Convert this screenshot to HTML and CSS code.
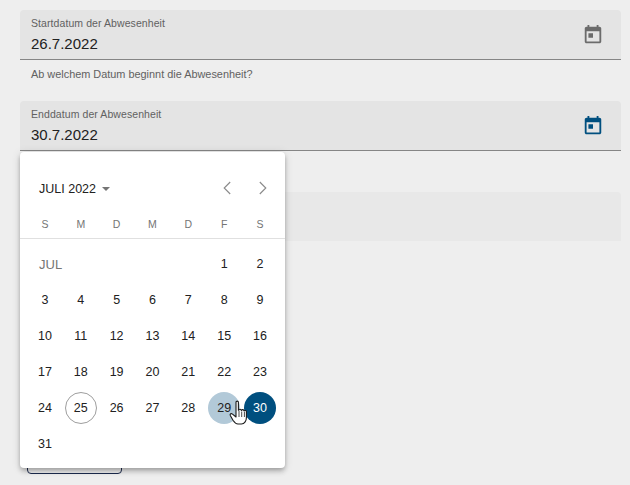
FILE: index.html
```html
<!DOCTYPE html>
<html lang="de">
<head>
<meta charset="utf-8">
<title>Abwesenheit</title>
<link rel="stylesheet" href="styles.css">
</head>
<body>
<main class="form">
  <section class="block">
    <div class="field">
      <div class="field-text">
        <label class="field-label">Startdatum der Abwesenheit</label>
        <div class="field-value">26.7.2022</div>
      </div>
      <svg class="cal-icon" viewBox="0 0 24 24"><path d="M19 3h-1V1h-2v2H8V1H6v2H5c-1.11 0-2 .9-2 2v14c0 1.1.89 2 2 2h14c1.1 0 2-.9 2-2V5c0-1.1-.9-2-2-2zm0 16H5V8h14v11zM7 10h5v5H7z"/></svg>
    </div>
    <p class="hint">Ab welchem Datum beginnt die Abwesenheit?</p>
  </section>
  <section class="block">
    <div class="field">
      <div class="field-text">
        <label class="field-label">Enddatum der Abwesenheit</label>
        <div class="field-value">30.7.2022</div>
      </div>
      <svg class="cal-icon cal-active" viewBox="0 0 24 24"><path d="M19 3h-1V1h-2v2H8V1H6v2H5c-1.11 0-2 .9-2 2v14c0 1.1.89 2 2 2h14c1.1 0 2-.9 2-2V5c0-1.1-.9-2-2-2zm0 16H5V8h14v11zM7 10h5v5H7z"/></svg>
    </div>
    <p class="hint"></p>
  </section>
  <section class="block">
    <div class="field field-plain"></div>
  </section>
  <button class="outline-btn" type="button"></button>
</main>

<div class="picker">
  <header class="picker-head">
    <div class="month-select">JULI 2022<span class="caret"></span></div>
    <div class="picker-nav">
      <svg viewBox="0 0 24 24"><path d="M16 4.500 8.500 12l7.500 7.500"/></svg>
      <svg viewBox="0 0 24 24"><path d="M8 4.500 15.500 12 8 19.500"/></svg>
    </div>
  </header>
  <div class="weekdays"><span>S</span><span>M</span><span>D</span><span>M</span><span>D</span><span>F</span><span>S</span></div>
  <div class="days">
    <span class="month-tag">JUL</span><span>1</span><span>2</span>
    <span>3</span><span>4</span><span>5</span><span>6</span><span>7</span><span>8</span><span>9</span>
    <span>10</span><span>11</span><span>12</span><span>13</span><span>14</span><span>15</span><span>16</span>
    <span>17</span><span>18</span><span>19</span><span>20</span><span>21</span><span>22</span><span>23</span>
    <span>24</span><span><b class="today">25</b></span><span>26</span><span>27</span><span>28</span><span><b class="start">29</b></span><span><b class="selected">30</b></span>
    <span>31</span>
  </div>
</div>

<svg class="cursor" viewBox="0 0 20 26"><path d="M7 2.200c0-1.500 2.400-1.500 2.400 0v8l.6-.1c0-1.200 2.200-1.200 2.200.1l.5.2c.1-1.100 2.100-1 2.200.3l.5.3c.2-.9 2-.7 2 .6v5.900c0 3-1.700 6.500-5 6.500H9c-2.400 0-3.600-1.500-5-3.700L1.300 15.500c-.7-1.400 1-2.600 2.200-1.400L7 17z"/><path class="cursor-line" d="M10 11v6M12.700 11.500V17M15.400 12v5"/></svg>
</body>
</html>
```

FILE: styles.css
```css
* { box-sizing: border-box; }
html, body { height: 100%; overflow: hidden; }
body {
  margin: 0;
  background: #eeeeee;
  font-family: "Liberation Sans", Arial, sans-serif;
  color: #212121;
}
.form {
  display: flex;
  flex-direction: column;
  padding: 10px 9px 0 20px;
}
.block { flex: none; height: 91px; }
.field {
  display: flex;
  align-items: center;
  justify-content: space-between;
  height: 50px;
  padding: 0 17px 0 11px;
  background: #e4e4e4;
  border-radius: 4px 4px 0 0;
  border-bottom: 1px solid #858585;
}
.field-plain { background: #e8e8e8; border-bottom: 0; height: 49px; }
.field-text { display: flex; flex-direction: column; gap: 4px; padding-top: 2px; }
.field-label { font-size: 10.5px; line-height: 13px; letter-spacing: .08px; color: #616161; }
.field-value { font-size: 15px; line-height: 20px; color: #212121; }
.cal-icon { width: 22px; height: 22px; fill: #6b6b6b; }
.cal-active { fill: #004f7f; }
.hint {
  margin: 0;
  padding: 8px 0 0 11px;
  font-size: 10.9px;
  line-height: 13px;
  color: #616161;
}
.outline-btn {
  flex: none;
  align-self: flex-start;
  width: 95px;
  height: 36px;
  margin: 155px 0 0 7px;
  background: transparent;
  border: 1px solid #1d2b4f;
  border-radius: 4px;
}
.picker {
  position: absolute;
  left: 20px;
  top: 152px;
  width: 265px;
  height: 316px;
  background: #fff;
  border-radius: 4px;
  box-shadow: 0 2px 4px -1px rgba(0,0,0,.2), 0 4px 5px rgba(0,0,0,.14), 0 1px 10px rgba(0,0,0,.12);
}
.picker-head {
  display: flex;
  align-items: center;
  justify-content: space-between;
  height: 36px;
  margin-top: 18px;
  padding: 0 10px 0 19px;
}
.month-select { display: flex; align-items: center; font-size: 12.5px; line-height: 20px; padding-top: 1px; color: #212121; }
.caret {
  width: 0; height: 0;
  margin-left: 6px;
  border-left: 4px solid transparent;
  border-right: 4px solid transparent;
  border-top: 4px solid #757575;
}
.picker-nav { display: flex; gap: 12px; }
.picker-nav svg { width: 24px; height: 24px; fill: none; stroke: #8a8a8a; stroke-width: 1.4; transform: scale(.8); }
.weekdays {
  display: grid;
  grid-template-columns: repeat(7, 35.85px);
  padding: 0 0 0 7px;
  margin-top: 12px;
  height: 21px;
  border-bottom: 1px solid #e0e0e0;
  font-size: 10.5px;
  line-height: 12px;
  text-align: center;
  color: #757575;
}
.days {
  display: grid;
  grid-template-columns: repeat(7, 35.85px);
  grid-auto-rows: 36px;
  padding: 7px 0 0 7px;
  font-size: 12.5px;
  color: #212121;
}
.days span { display: flex; align-items: center; justify-content: center; }
.days .month-tag { grid-column: span 5; justify-content: flex-start; padding-left: 12px; font-size: 13px; color: #757575; }
.days b {
  display: flex;
  align-items: center;
  justify-content: center;
  width: 32px;
  height: 32px;
  font-weight: 400;
  border-radius: 50%;
}
.today { border: 1px solid #9e9e9e; }
.start { background: #b2c9d8; }
.selected { background: #004f7f; color: #fff; }
.cursor {
  position: absolute;
  left: 229px;
  top: 400px;
  width: 20px;
  height: 26px;
}
.cursor path { fill: #fff; stroke: #1b1b1b; stroke-width: 1.1; stroke-linejoin: round; }
.cursor .cursor-line { fill: none; stroke-width: .8; }
```
